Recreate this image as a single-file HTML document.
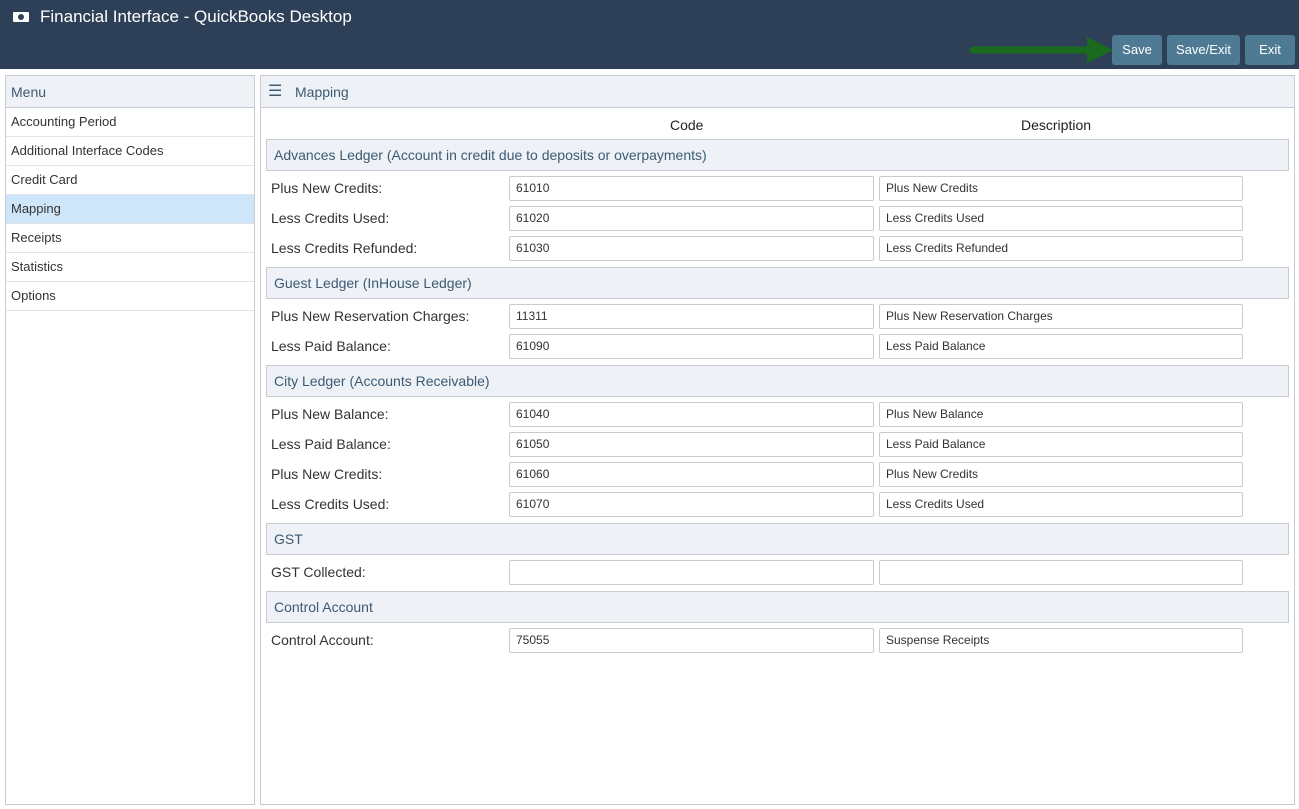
<!DOCTYPE html>
<html><head><meta charset="utf-8"><style>
*{box-sizing:border-box;margin:0;padding:0}
body{width:1299px;height:809px;background:#fff;font-family:"Liberation Sans",sans-serif;position:relative;overflow:hidden;color:#333}
.hdr{position:absolute;left:0;top:0;width:1299px;height:69px;background:#2e4057}
.title{position:absolute;left:40px;top:7px;color:#fff;font-size:17px}
.btn{position:absolute;top:35px;height:30px;background:#4e7a93;color:#fff;font-size:13px;border-radius:3px;text-align:center;line-height:30px}
.panel{position:absolute;border:1px solid #c8ccd0;background:#fff}
.ph{position:absolute;left:0;top:0;right:0;height:32px;background:#eef1f5;border-bottom:1px solid #c8ccd0;color:#3c5a74;font-size:14px;line-height:32px}
.mi{position:absolute;left:0;right:0;height:29px;border-bottom:1px solid #e3e5e8;font-size:13px;line-height:28px;padding-left:5px;color:#333}
.sec{position:absolute;left:266px;width:1023px;height:32px;background:#eef1f5;border:1px solid #c8ccd0;color:#3c5a74;font-size:14px;line-height:31px;padding-left:7px}
.lbl{position:absolute;left:271px;font-size:14px;color:#333}
.in{position:absolute;height:25px;border:1px solid #c8ccd0;background:#fff;font-size:12px;line-height:23px;padding-left:6px;color:#333;border-radius:2px}
.c{left:509px;width:365px}.d{left:879px;width:364px}
</style></head><body>
<div class="hdr">
<div style="position:absolute;left:13px;top:12px;width:16px;height:10px;background:#fff;border-radius:1px"><div style="position:absolute;left:5px;top:2px;width:6px;height:6px;border-radius:50%;background:#2e4057"></div></div>
<div class="title">Financial Interface - QuickBooks Desktop</div>
<svg style="position:absolute;left:965px;top:34px" width="150" height="32"><line x1="8" y1="16" x2="125" y2="16" stroke="#1b6b1e" stroke-width="7" stroke-linecap="round"/><polygon points="122,3 148,16 122,29" fill="#1b6b1e"/></svg>
<div class="btn" style="left:1112px;width:50px">Save</div>
<div class="btn" style="left:1167px;width:73px">Save/Exit</div>
<div class="btn" style="left:1245px;width:50px">Exit</div>
</div>
<div class="panel" style="left:5px;top:75px;width:250px;height:730px">
<div class="ph" style="padding-left:5px">Menu</div>
<div class="mi" style="top:32px">Accounting Period</div>
<div class="mi" style="top:61px">Additional Interface Codes</div>
<div class="mi" style="top:90px">Credit Card</div>
<div class="mi" style="top:119px;background:#cfe6fa">Mapping</div>
<div class="mi" style="top:148px">Receipts</div>
<div class="mi" style="top:177px">Statistics</div>
<div class="mi" style="top:206px">Options</div>
</div>
<div class="panel" style="left:260px;top:75px;width:1035px;height:730px">
<div class="ph" style="padding-left:34px"><span style="position:absolute;left:7px;top:0;font-size:16px">&#9776;</span>Mapping</div>
</div>
<div style="position:absolute;left:670px;top:117px;font-size:14px;color:#222">Code</div>
<div style="position:absolute;left:1021px;top:117px;font-size:14px;color:#222">Description</div>

<div class="sec" style="top:139px">Advances Ledger (Account in credit due to deposits or overpayments)</div>
<div class="lbl" style="top:180px">Plus New Credits:</div><div class="in c" style="top:176px">61010</div><div class="in d" style="top:176px">Plus New Credits</div>
<div class="lbl" style="top:210px">Less Credits Used:</div><div class="in c" style="top:206px">61020</div><div class="in d" style="top:206px">Less Credits Used</div>
<div class="lbl" style="top:240px">Less Credits Refunded:</div><div class="in c" style="top:236px">61030</div><div class="in d" style="top:236px">Less Credits Refunded</div>

<div class="sec" style="top:267px">Guest Ledger (InHouse Ledger)</div>
<div class="lbl" style="top:308px">Plus New Reservation Charges:</div><div class="in c" style="top:304px">11311</div><div class="in d" style="top:304px">Plus New Reservation Charges</div>
<div class="lbl" style="top:338px">Less Paid Balance:</div><div class="in c" style="top:334px">61090</div><div class="in d" style="top:334px">Less Paid Balance</div>

<div class="sec" style="top:365px">City Ledger (Accounts Receivable)</div>
<div class="lbl" style="top:406px">Plus New Balance:</div><div class="in c" style="top:402px">61040</div><div class="in d" style="top:402px">Plus New Balance</div>
<div class="lbl" style="top:436px">Less Paid Balance:</div><div class="in c" style="top:432px">61050</div><div class="in d" style="top:432px">Less Paid Balance</div>
<div class="lbl" style="top:466px">Plus New Credits:</div><div class="in c" style="top:462px">61060</div><div class="in d" style="top:462px">Plus New Credits</div>
<div class="lbl" style="top:496px">Less Credits Used:</div><div class="in c" style="top:492px">61070</div><div class="in d" style="top:492px">Less Credits Used</div>

<div class="sec" style="top:523px">GST</div>
<div class="lbl" style="top:564px">GST Collected:</div><div class="in c" style="top:560px"></div><div class="in d" style="top:560px"></div>

<div class="sec" style="top:591px">Control Account</div>
<div class="lbl" style="top:632px">Control Account:</div><div class="in c" style="top:628px">75055</div><div class="in d" style="top:628px">Suspense Receipts</div>
</body></html>
